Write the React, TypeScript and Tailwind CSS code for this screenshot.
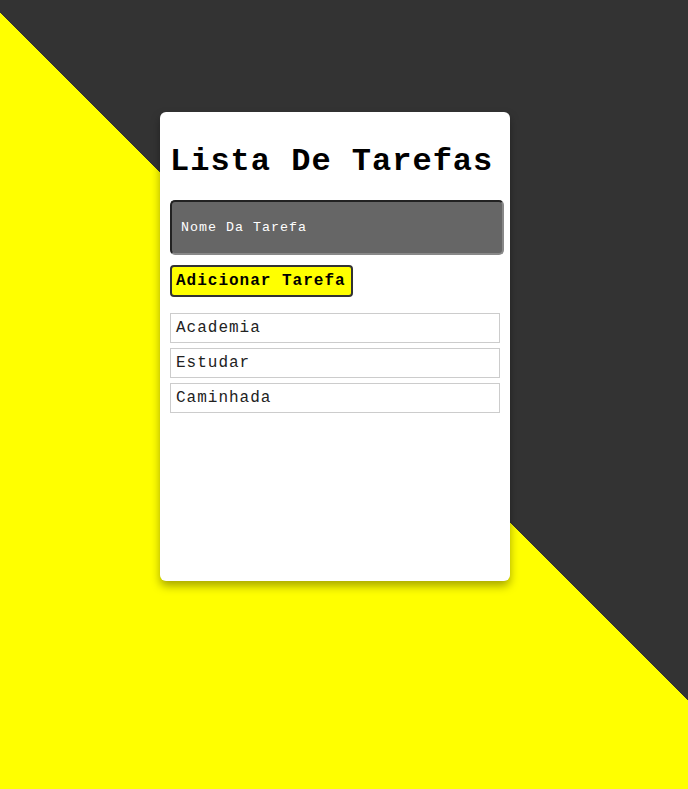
export default function App() {
  const tarefas = ["Academia", "Estudar", "Caminhada"];

  return (
    <div className="min-h-screen w-full overflow-hidden bg-[linear-gradient(225deg,#333333_47.46%,#ffff00_47.46%)] font-['Liberation_Mono','Courier_New',monospace] tracking-[1px]">
      <div className="h-[112px]" />
      <div className="ml-[160px] flex h-[469px] w-[350px] flex-col rounded-md bg-white px-[10px] pt-[10px] shadow-[0_5px_10px_rgba(0,0,0,0.35)]">
        <h1 className="mt-[22px] mb-[20px] text-[32px] leading-[36px] font-bold text-black">Lista De Tarefas</h1>

        <input
          type="text"
          placeholder="Nome Da Tarefa"
          className="h-[55px] w-[334px] rounded-[5px] border-2 border-t-[#222] border-l-[#222] border-r-[#888] border-b-[#888] bg-[#666] px-[9px] text-[13.33px] text-white outline-none placeholder:text-white"
        />

        <button className="mt-[10px] h-[32px] w-[183px] rounded-[4px] border-2 border-[#333] bg-[#ffff00] pl-[4px] text-left text-[16px] font-bold text-black">
          Adicionar Tarefa
        </button>

        <ul className="mt-[16px] flex flex-col gap-[5px]">
          {tarefas.map((t) => (
            <li key={t} className="flex h-[30px] w-[330px] items-center border border-[#ccc] px-[5px] text-[16px] text-[#222]">
              {t}
            </li>
          ))}
        </ul>
      </div>
    </div>
  );
}
